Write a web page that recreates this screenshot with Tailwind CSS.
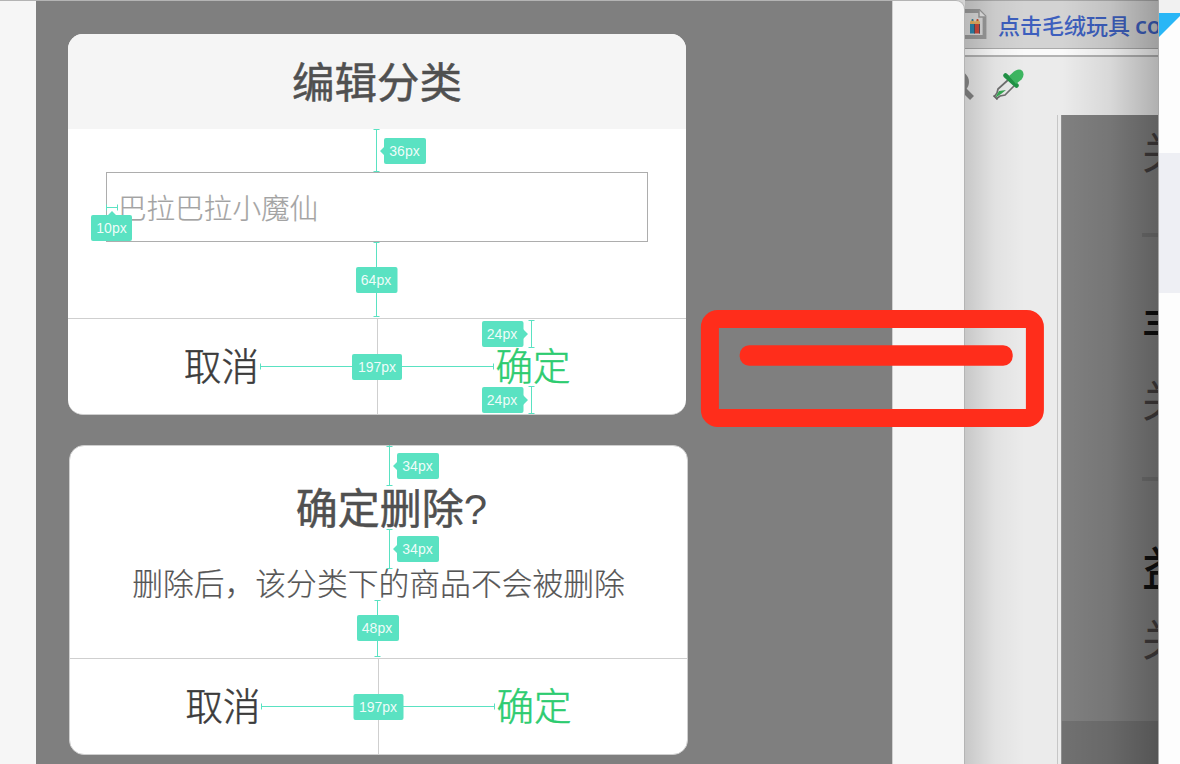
<!DOCTYPE html>
<html lang="zh-CN">
<head>
<meta charset="utf-8">
<title>编辑分类</title>
<script src="https://cdn.jsdelivr.net/npm/@tailwindcss/browser@4"></script>
</head>
<body class="font-['Liberation_Sans','Noto_Sans_CJK_SC',sans-serif]">
<main class="relative flex w-[1180px] h-[764px] overflow-hidden bg-[#d3d3d3] whitespace-nowrap">

  <!-- front window -->
  <section class="relative z-10 flex w-[965px] h-full shrink-0 rounded-tr-[9px] overflow-hidden border-t border-r border-[#b4b4b4] bg-[#f6f6f6]">
    <div class="w-[36px] shrink-0"></div>
    <div class="w-[856px] shrink-0 bg-[#7f7f7f] pl-[32px] pt-[33px] flex flex-col gap-[30px]">

      <article class="w-[618px] h-[381px] shrink-0 rounded-[15px] bg-white overflow-hidden flex flex-col border-b border-[#cfcfcf]">
        <header class="h-[95px] shrink-0 bg-[#f5f5f5] flex items-center justify-center pt-[5px] text-[42.5px] leading-none text-[#505050] [-webkit-text-stroke:0.5px]"><h1>编辑分类</h1></header>
        <div class="h-[189px] shrink-0 px-[38px] pt-[43px]">
          <div class="w-[542px] h-[70px] border border-[#adadad] pl-[11px] pt-[4px] flex items-center text-[28.6px] font-light leading-none text-[#a3a3a3] [-webkit-text-stroke:0.2px]">巴拉巴拉小魔仙</div>
        </div>
        <footer class="flex-1 border-t border-[#cfcfcf] flex text-[37.5px] font-light leading-none [-webkit-text-stroke:0.5px]">
          <div class="w-[310px] border-r border-[#cfcfcf] pt-[3px] pr-[2px] flex items-center justify-center text-[#3b3b3b]">取消</div>
          <div class="flex-1 pt-[3px] pl-[2px] flex items-center justify-center text-[#2dcc70]">确定</div>
        </footer>
      </article>

      <article class="ml-px w-[619px] h-[310px] shrink-0 rounded-[15px] bg-white overflow-hidden flex flex-col border border-[#cfcfcf]">
        <div class="h-[212px] shrink-0 flex flex-col items-center pt-[43px]">
          <h2 class="pl-[26px] text-[42px] leading-none text-[#505050] [-webkit-text-stroke:0.5px]">确定删除<span class="[-webkit-text-stroke:0px]">?</span></h2>
          <p class="mt-[39px] text-[30.8px] font-light leading-none text-[#555] [-webkit-text-stroke:0.2px]">删除后，该分类下的商品不会被删除</p>
        </div>
        <footer class="flex-1 border-t border-[#cfcfcf] flex text-[37.5px] font-light leading-none [-webkit-text-stroke:0.5px]">
          <div class="w-[309px] border-r border-[#cfcfcf] pt-[3px] pr-[2px] flex items-center justify-center text-[#3b3b3b]">取消</div>
          <div class="flex-1 pt-[3px] pl-[2px] flex items-center justify-center text-[#2dcc70]">确定</div>
        </footer>
      </article>
    </div>
    <div class="flex-1 border-l border-[#d0d0d0]"></div>
  </section>

  <!-- back window -->
  <section class="relative w-[193px] h-full shrink-0 flex flex-col overflow-hidden bg-[#ebebeb]">
    <div class="h-[49px] shrink-0 border-t border-b border-[#aaa] bg-[#d3d3d3] flex items-center">
      <svg class="w-[22px] h-[31px] shrink-0" viewBox="0 0 22 31">
        <path d="M-4 2H14L19.500 7.500V28H-4Z" fill="#dadada" stroke="#9a9a9a" stroke-width="3.800"/>
        <path d="M14 1V8H21" fill="#e4e4e4" stroke="#9a9a9a" stroke-width="1.500"/>
        <path d="M5 14h5v10.500H5z" fill="#2d87ae"/><path d="M10 14h5v10.500h-5z" fill="#cf4a3c"/>
        <path d="M5 15V13L7 10h1L10 13V15zM10 15V13L12 10h1L15 13V15z" fill="#e7b162"/>
        <path d="M7.500 10v2" stroke="#2d87ae" stroke-width="1.500"/><path d="M12.500 10v2" stroke="#cf4a3c" stroke-width="1.500"/>
        <path d="M9.500 15v9.500M14.500 15v9.500" stroke="#54505f" stroke-width="1"/>
      </svg>
      <span class="ml-[11px] pb-[1px] text-[22px] font-medium text-[#3d5fbe] font-['Noto_Sans_CJK_SC',sans-serif]">点击毛绒玩具 <span class="font-['Open_Sans'] font-semibold text-[24px] leading-none">co</span></span>
    </div>
    <div class="h-[6px] shrink-0 bg-[#fafafa]"></div>
    <div class="h-[60px] shrink-0 border-t-2 border-[#b3b3b3] flex">
      <svg class="w-[70px] h-[58px] shrink-0" viewBox="0 0 70 58">
        <circle cx="-7" cy="25" r="9" fill="none" stroke="#8a8a8a" stroke-width="4"/>
        <path d="M-1 33L7 41" stroke="#858585" stroke-width="5.500"/>
        <path d="M43 23L33 32L32 36L29 40M49 29L40 38L35 39L31 42" fill="none" stroke="#6f6f6f" stroke-width="1.700"/>
        <path d="M34 34L41 33L36 37L30 41Z" fill="#35a852"/>
        <path d="M28.500 38.500l4 4" stroke="#666" stroke-width="1.600"/>
        <path d="M40.500 18.500L51.500 28.500" stroke="#219346" stroke-width="4.500" stroke-linecap="round"/>
        <path d="M44 19L49 14.500Q54 11 57.500 14Q60 18 56.500 22.500L51 27Z" fill="#3db660"/>
      </svg>
    </div>
    <div class="flex-1 flex">
      <div class="w-[93px] border-r border-[#c6c6c6]"></div>
      <div class="w-[3px]"></div>
      <div class="flex-1 bg-[#808080] border-l border-[#8f8f8f] flex flex-col overflow-hidden font-['Noto_Sans_CJK_SC',sans-serif] leading-none">
        <div class="h-[122px] border-b-4 border-[#727272] ml-[80px] pt-[14px] text-[43px] text-[#423d3d]">关</div>
        <div class="h-[244px] border-b-4 border-[#727272] ml-[80px] pt-[65px] flex flex-col gap-[32px] text-[43px] text-[#423d3d]"><b class="font-medium text-[#101010]">丰</b><span>关</span></div>
        <div class="h-[240px] shrink-0 ml-[80px] pt-[61px] flex flex-col gap-[27px] text-[43px] text-[#423d3d]"><b class="font-medium text-[#101010] text-[47px]">益</b><span>关</span></div>
        <div class="flex-1 bg-[#717171]"></div>
      </div>
    </div>
    <!-- shadows cast by the neighbouring windows -->
    <div class="absolute left-0 top-0 w-[60px] h-full bg-linear-to-r from-black/15 via-black/4 to-transparent"></div>
    <div class="absolute right-0 top-0 w-[96px] h-full bg-linear-to-r from-transparent via-black/8 to-black/25"></div>
  </section>

  <!-- right window -->
  <section class="flex-1 flex flex-col border-l border-[#a8a8a8] bg-[#fdfdfd]">
    <div class="h-[13px] bg-[#f1f1f1]"></div>
    <svg class="w-[21px] h-[140px]" viewBox="0 0 21 140"><path d="M0 0H21V3L0 24Z" fill="#29b6f6"/></svg>
    <div class="h-[140px] bg-[#eeeff4]"></div>
  </section>

  <!-- measurement marks and highlight strokes over the canvas -->
  <svg class="absolute z-20 inset-0 w-[1180px] h-[764px]" viewBox="0 0 1180 764">
    <g fill="none" stroke="#5ae2c2">
      <path d="M376.500 129V172M373.500 129.500h6M373.500 171.500h6"/>
      <path d="M106.500 207.500H117.500M106.500 204.500v6M117.500 204.500v6"/>
      <path d="M376.500 242V317M373.500 242.500h6M373.500 316.500h6"/>
      <path d="M260.500 366.500H493.500M260.500 363.500v6M493.500 363.500v6"/>
      <path d="M531.500 320V347M528.500 320.500h6M528.500 347.500h6"/>
      <path d="M531.500 386V414M528.500 386.500h6M528.500 413.500h6"/>
      <path d="M389.500 445V486M386.500 446.500h6M386.500 485.500h6"/>
      <path d="M389.500 529V569M386.500 529.500h6M386.500 568.500h6"/>
      <path d="M377.500 600V657M374.500 600.500h6M374.500 656.500h6"/>
      <path d="M261.500 706.500H494.500M261.500 703.500v6M494.500 703.500v6"/>
    </g>
    <g fill="#5ae2c2">
      <path d="M385 146l-5 5 5 5zM107 216l5-5 5 5zM398 461l-5 5 5 5zM398 544l-5 5 5 5zM523 329l5 5-5 5zM523 395l5 5-5 5z"/>
      <rect x="384" y="138" width="42" height="26" rx="2"/><rect x="91" y="215" width="41" height="26" rx="2"/>
      <rect x="356" y="267" width="41.500" height="26" rx="2"/><rect x="352" y="354" width="50" height="26" rx="2"/>
      <rect x="482" y="321" width="41.500" height="26" rx="2"/><rect x="482" y="387" width="41.500" height="26" rx="2"/>
      <rect x="397" y="453" width="42" height="26" rx="2"/><rect x="397" y="536" width="42" height="26" rx="2"/>
      <rect x="357" y="615" width="42" height="26" rx="2"/><rect x="353.500" y="694" width="50" height="26" rx="2"/>
    </g>
    <g fill="#fff" fill-opacity=".92" font-family="Liberation Sans, sans-serif" font-size="14" text-anchor="middle">
      <text x="404.500" y="156">36px</text><text x="111.500" y="233">10px</text><text x="376" y="285">64px</text>
      <text x="377" y="372">197px</text><text x="502" y="339">24px</text><text x="502" y="405">24px</text>
      <text x="417.500" y="471">34px</text><text x="417.500" y="554">34px</text><text x="377" y="633">48px</text><text x="378" y="712">197px</text>
    </g>
    <rect x="709.900" y="319" width="325" height="99" rx="8" fill="none" stroke="#ff2d1b" stroke-width="18"/>
    <rect x="739.700" y="345.300" width="273" height="20.500" rx="9.500" fill="#ff2d1b"/>
  </svg>
</main>
</body>
</html>
